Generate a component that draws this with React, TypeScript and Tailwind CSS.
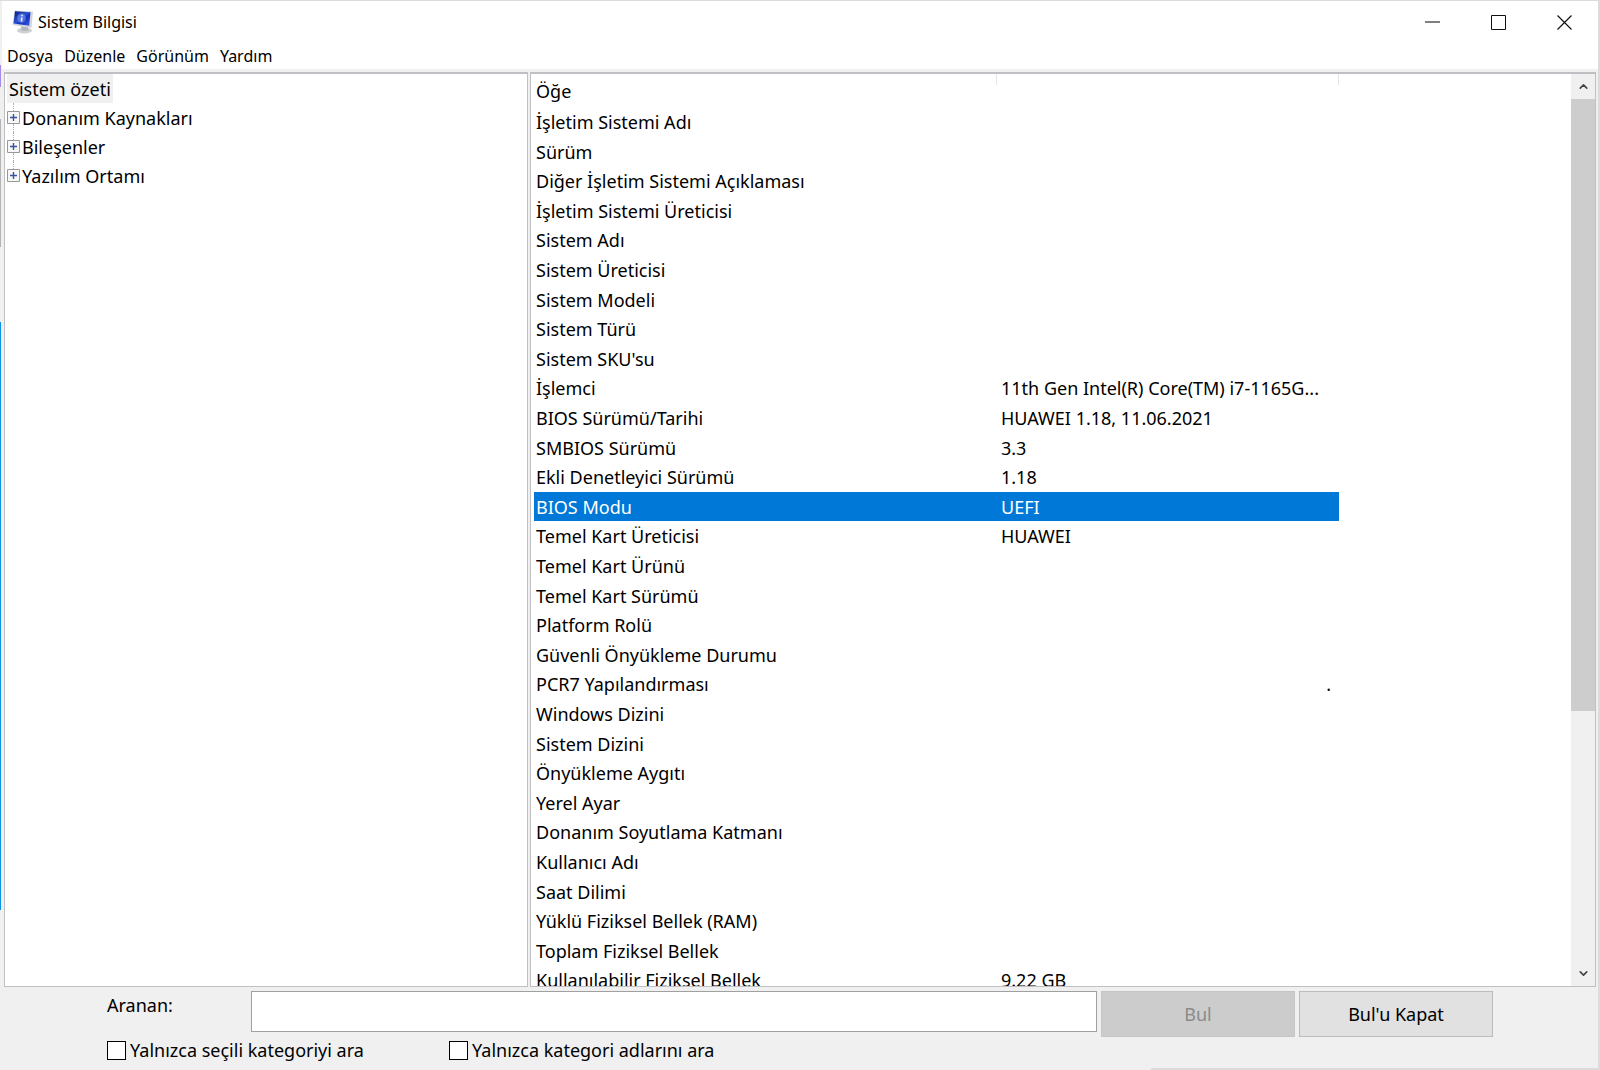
import { ChevronDown, ChevronUp } from "lucide-react";

interface InfoRow {
  item: string;
  value?: string;
  note?: string;
}

const MENU = ["Dosya", "Düzenle", "Görünüm", "Yardım"];

const TREE = ["Donanım Kaynakları", "Bileşenler", "Yazılım Ortamı"];

const SELECTED = "BIOS Modu";

const ROWS: InfoRow[] = [
  { item: "İşletim Sistemi Adı" },
  { item: "Sürüm" },
  { item: "Diğer İşletim Sistemi Açıklaması" },
  { item: "İşletim Sistemi Üreticisi" },
  { item: "Sistem Adı" },
  { item: "Sistem Üreticisi" },
  { item: "Sistem Modeli" },
  { item: "Sistem Türü" },
  { item: "Sistem SKU'su" },
  { item: "İşlemci", value: "11th Gen Intel(R) Core(TM) i7-1165G..." },
  { item: "BIOS Sürümü/Tarihi", value: "HUAWEI 1.18, 11.06.2021" },
  { item: "SMBIOS Sürümü", value: "3.3" },
  { item: "Ekli Denetleyici Sürümü", value: "1.18" },
  { item: "BIOS Modu", value: "UEFI" },
  { item: "Temel Kart Üreticisi", value: "HUAWEI" },
  { item: "Temel Kart Ürünü" },
  { item: "Temel Kart Sürümü" },
  { item: "Platform Rolü" },
  { item: "Güvenli Önyükleme Durumu" },
  { item: "PCR7 Yapılandırması", note: "." },
  { item: "Windows Dizini" },
  { item: "Sistem Dizini" },
  { item: "Önyükleme Aygıtı" },
  { item: "Yerel Ayar" },
  { item: "Donanım Soyutlama Katmanı" },
  { item: "Kullanıcı Adı" },
  { item: "Saat Dilimi" },
  { item: "Yüklü Fiziksel Bellek (RAM)" },
  { item: "Toplam Fiziksel Bellek" },
  { item: "Kullanılabilir Fiziksel Bellek", value: "9.22 GB" },
];

function AppIcon() {
  return (
    <svg width="22" height="24" viewBox="0 0 22 24" aria-hidden="true">
      <defs>
        <linearGradient id="screen" x1="0" y1="0" x2="1" y2="1">
          <stop offset="0" stopColor="#06127a" />
          <stop offset="0.45" stopColor="#2a55d4" />
          <stop offset="0.6" stopColor="#1430c0" />
          <stop offset="1" stopColor="#3c62e0" />
        </linearGradient>
      </defs>
      <ellipse cx="12.500" cy="20.500" rx="7.500" ry="3" fill="#cfd0d3" />
      <path d="M9 16l7 .8.6 4H9.600z" fill="#b2b5bb" />
      <path d="M2.500 .5L21 1.500 19.500 18 .5 15z" fill="#d3d6dc" />
      <path d="M3 1.200l15.500 1-1.300 13.600L1.500 13.400z" fill="url(#screen)" />
      <ellipse cx="9.500" cy="8.200" rx="4.300" ry="4.800" fill="#7f9cf0" opacity="0.55" />
      <path d="M10 4.800v1.400M9.800 7.500l-.3 4" stroke="#e8eeff" strokeWidth="1.600" />
    </svg>
  );
}

function TitleBar() {
  return (
    <header className="flex h-[42px] items-center justify-between pl-[10px]">
      <div className="flex items-center gap-1">
        <AppIcon />
        <h1 className="text-base">Sistem Bilgisi</h1>
      </div>
      <div className="flex h-full items-center pr-px">
        <button aria-label="Simge durumuna küçült" className="flex h-full w-[66px] items-center justify-center">
          <svg width="15" height="15" viewBox="0 0 15 15">
            <path d="M0 7h15" stroke="#808080" strokeWidth="2" />
          </svg>
        </button>
        <button aria-label="Ekranı kapla" className="flex h-full w-[66px] items-center justify-center">
          <svg width="15" height="15" viewBox="0 0 15 15">
            <path d="M.5.5h14v14H.5z" fill="none" stroke="#111" />
          </svg>
        </button>
        <button aria-label="Kapat" className="flex h-full w-[66px] items-center justify-center">
          <svg width="15" height="15" viewBox="0 0 15 15">
            <path d="M.5.5l14 14M14.500.5l-14 14" stroke="#111" strokeWidth="1.200" />
          </svg>
        </button>
      </div>
    </header>
  );
}

function MenuBar() {
  return (
    <nav className="flex h-[26px] items-center gap-[11px] pl-[5px] text-base">
      {MENU.map((label) => (
        <button key={label}>{label}</button>
      ))}
    </nav>
  );
}

function CategoryTree() {
  return (
    <aside className="w-[524px] shrink-0 border border-t-2 border-[#c0c0c4] bg-white pl-[2px]">
      <button className="block h-[29px] bg-[#f0f0f0] px-[2px]">Sistem özeti</button>
      <ul>
        {TREE.map((label) => (
          <li key={label} className="group flex h-[29px] items-center">
            <button aria-label={`${label} genişlet`} className="flex h-full flex-col items-center">
              <span className="w-px flex-1 border-l border-dotted border-[#b0b0b0]" />
              <svg width="13" height="13" viewBox="0 0 13 13">
                <path d="M.5.5h12v12H.5z" fill="#f7f7f7" stroke="#989898" />
                <path d="M3 6.500h7M6.500 3v7" stroke="#3b4f9c" strokeWidth="1.400" />
              </svg>
              <span className="w-px flex-1 border-l border-dotted border-[#b0b0b0] group-last:border-transparent" />
            </button>
            <span className="pl-[2px]">{label}</span>
          </li>
        ))}
      </ul>
    </aside>
  );
}

function InfoTable() {
  return (
    <table className="w-full table-fixed border-collapse text-left">
      <colgroup>
        <col className="w-[462px]" />
        <col className="w-[343px]" />
        <col />
      </colgroup>
      <thead>
        <tr className="h-[33px]">
          <th className="p-0 pl-[2px] font-normal">Öğe</th>
          <th className="p-0 align-top">
            <div className="h-[11px] border-x border-[#e5e5e5]" />
          </th>
          <th className="p-0" />
        </tr>
      </thead>
      <tbody>
        {ROWS.map((row) => {
          const color = row.item === SELECTED ? "bg-[#0078d7] text-white" : "";
          return (
            <tr key={row.item} className="h-[30px] nth-[5n+2]:h-[29px] nth-[5n+4]:h-[29px]">
              <td className={`p-0 pl-[2px] whitespace-nowrap ${color}`}>{row.item}</td>
              <td className={`p-0 pl-[5px] whitespace-nowrap ${color}`}>
                {row.value}
                {row.note && <div className="pr-2 text-right">{row.note}</div>}
              </td>
              <td className="p-0" />
            </tr>
          );
        })}
      </tbody>
    </table>
  );
}

function ScrollBar() {
  return (
    <div className="flex w-6 shrink-0 flex-col bg-[#f0f0f0]">
      <button aria-label="Yukarı kaydır" className="flex h-[25px] items-center justify-center">
        <ChevronUp size={13} strokeWidth={3} color="#444" />
      </button>
      <div className="flex-1">
        <div className="h-[71%] bg-[#cdcdcd]" />
      </div>
      <button aria-label="Aşağı kaydır" className="flex h-[25px] items-center justify-center">
        <ChevronDown size={13} strokeWidth={3} color="#444" />
      </button>
    </div>
  );
}

function FindBar() {
  return (
    <form className="h-[81px] px-[105px]" onSubmit={(e) => e.preventDefault()}>
      <div className="flex items-start pt-1">
        <label htmlFor="find" className="w-[144px] shrink-0">
          Aranan:
        </label>
        <input
          id="find"
          type="text"
          className="h-[41px] min-w-0 flex-1 border border-[#a0a0a0] bg-white px-2 outline-none"
        />
        <button disabled className="ml-1 h-[46px] w-[194px] border border-[#c6c6c6] bg-[#cccccc] text-[#8a8a8a]">
          Bul
        </button>
        <button className="ml-1 h-[46px] w-[194px] border border-[#bcbcbc] bg-[#e1e1e1]">Bul'u Kapat</button>
      </div>
      <div className="flex h-[26px]">
        <label className="flex w-[342px] items-center gap-1">
          <input type="checkbox" className="size-[19px] appearance-none border border-black bg-white" />
          Yalnızca seçili kategoriyi ara
        </label>
        <label className="flex items-center gap-1">
          <input type="checkbox" className="size-[19px] appearance-none border border-black bg-white" />
          Yalnızca kategori adlarını ara
        </label>
      </div>
    </form>
  );
}

// sliver of the windows lying behind this one
function BackdropEdge() {
  return (
    <div className="flex w-[2px] shrink-0 flex-col items-start bg-[#f0f0f0]">
      <div className="h-[6%]" />
      <div className="h-[2%] w-px bg-[#a58be8]" />
      <div className="h-[3%]" />
      <div className="h-[12%] w-px bg-[#b4b4b4]" />
      <div className="h-[7%]" />
      <div className="h-[55%] w-px bg-[#0a95e6]" />
    </div>
  );
}

export default function App() {
  return (
    <div className="flex h-screen overflow-hidden border-t border-r-2 border-[#dcdcdc] bg-[#f0f0f0] font-['Noto_Sans','Open_Sans',sans-serif] text-lg leading-7 text-black">
      <BackdropEdge />
      <div className="flex min-w-0 flex-1 flex-col">
        <div className="bg-white">
          <TitleBar />
          <MenuBar />
        </div>
        <main className="flex min-h-0 flex-1 gap-[2px] px-[2px] pt-[3px]">
          <CategoryTree />
          <section className="flex min-w-0 flex-1 border border-t-2 border-[#c0c0c4] bg-white pl-[3px]">
            <div className="min-w-0 flex-1 overflow-hidden">
              <InfoTable />
            </div>
            <ScrollBar />
          </section>
        </main>
        <FindBar />
        <div className="ml-auto h-[2px] w-[28%] bg-[#dcdcdc]" />
      </div>
    </div>
  );
}
